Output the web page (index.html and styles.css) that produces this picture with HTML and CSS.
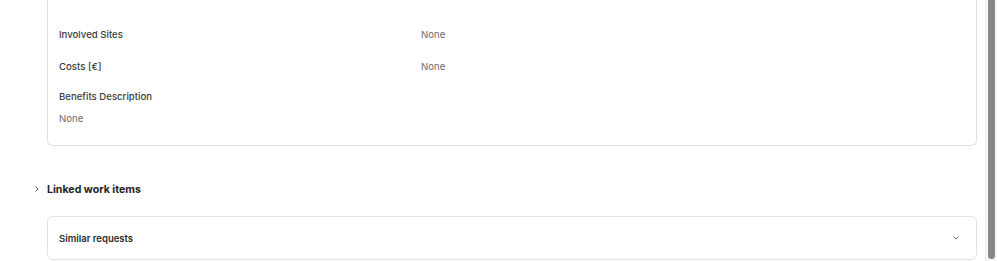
FILE: index.html
```html
<!DOCTYPE html>
<html lang="en">
<head>
    <meta charset="UTF-8">
    <meta name="viewport" content="width=device-width, initial-scale=1.0">
    <title>Request details</title>
    <link rel="stylesheet" href="styles.css">
</head>
<body>
    <div class="page">
        <div class="details-card">
            <div class="field">
                <span class="field-label">Involved Sites</span>
                <span class="field-value">None</span>
            </div>
            <div class="field">
                <span class="field-label">Costs [€]</span>
                <span class="field-value">None</span>
            </div>
            <div class="field-stack">
                <span class="field-label">Benefits Description</span>
                <span class="field-value">None</span>
            </div>
        </div>

        <div class="section-header">
            <svg class="chevron-right" viewBox="0 0 8 8">
                <path d="M2.5 1.5 L5 4 L2.5 6.5"/>
            </svg>
            <span class="section-title">Linked work items</span>
        </div>

        <div class="collapse-card">
            <span class="collapse-title">Similar requests</span>
            <svg class="chevron-down" viewBox="0 0 8 8">
                <path d="M1.5 2.5 L4 5 L6.5 2.5"/>
            </svg>
        </div>
    </div>

    <div class="scrollbar">
        <div class="scroll-thumb"></div>
    </div>
</body>
</html>
```

FILE: styles.css
```css
* {
    margin: 0;
    padding: 0;
    box-sizing: border-box;
}

body {
    font-family: Inter, 'Liberation Sans', Arial, sans-serif;
    background: #fff;
    height: 100vh;
    overflow: hidden;
    display: flex;
}

.page {
    flex: 1;
    padding: 0 8px 0 47px;
}

.details-card {
    border: 1px solid #e2e2e2;
    border-top: none;
    border-radius: 0 0 6px 6px;
    padding: 19px 11px 18px 11px;
}

.field {
    display: grid;
    grid-template-columns: 362px 1fr;
    align-items: center;
    height: 32px;
}

.field-stack {
    display: flex;
    flex-direction: column;
    gap: 6px;
    padding-top: 6px;
}

.field-label {
    font-size: 9.6px;
    line-height: 16px;
    font-weight: 500;
    color: #3b3b3b;
}

.field-value {
    font-size: 9.6px;
    line-height: 16px;
    color: #6b6b6b;
}

.section-header {
    display: flex;
    align-items: center;
    gap: 6px;
    margin: 35px 0 19px -14px;
    height: 16px;
}

.chevron-right {
    width: 8px;
    height: 8px;
    fill: none;
    stroke: #555;
    stroke-width: 1;
}

.section-title {
    font-size: 10.6px;
    font-weight: 700;
    color: #222;
}

.collapse-card {
    display: flex;
    align-items: center;
    justify-content: space-between;
    height: 44px;
    padding: 0 16px 0 11px;
    border: 1px solid #e2e2e2;
    border-radius: 6px;
}

.collapse-title {
    font-size: 9.5px;
    font-weight: 600;
    color: #2b2b2b;
}

.chevron-down {
    width: 8px;
    height: 8px;
    fill: none;
    stroke: #666;
    stroke-width: 1;
}

.scrollbar {
    width: 12px;
    background: #f7f7f7;
    border-left: 1px solid #ececec;
    padding: 0 2px 2px 2px;
}

.scroll-thumb {
    height: 100%;
    background: #878787;
    border-radius: 0 0 4px 4px;
}
```
